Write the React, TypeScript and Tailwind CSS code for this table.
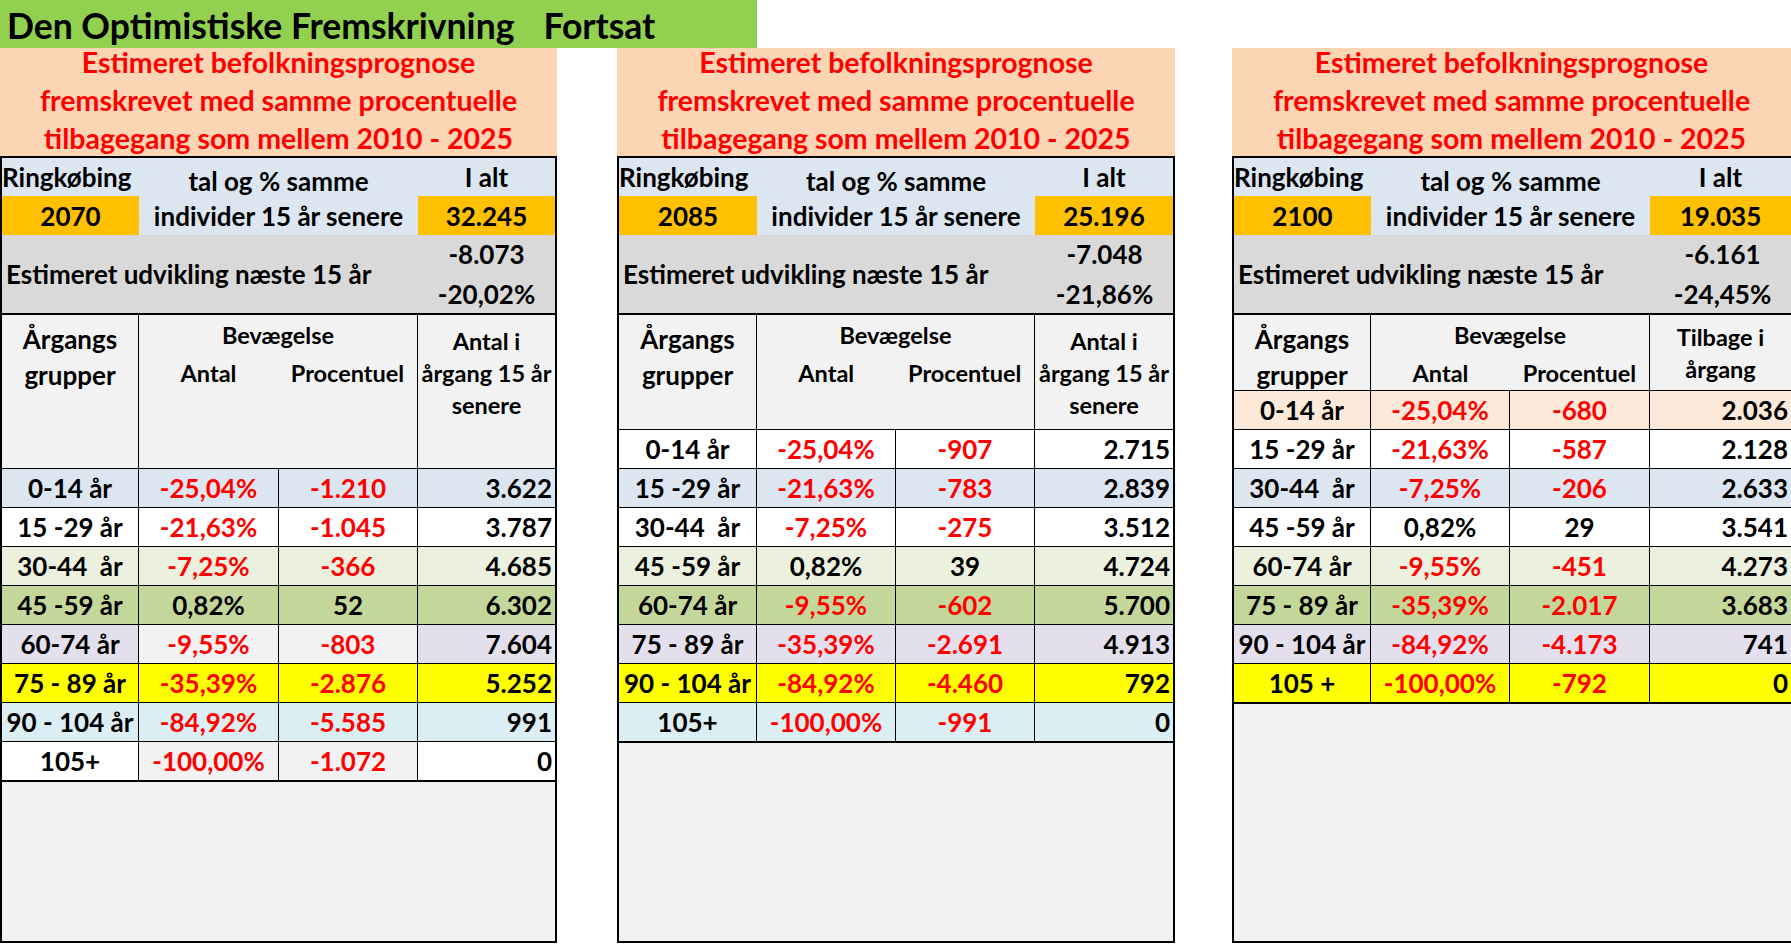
import React from "react";

type Row = {
  label: string;
  a: string;
  b: string;
  c: string;
  bg: string;
  mid?: string;
};

type TableDef = {
  year: string;
  total: string;
  dev1: string;
  dev2: string;
  col4: string[];
  headerH: string;
  col4Pt: string;
  cols: string;
  width: string;
  ml: string;
  rightBorder: boolean;
  rows: Row[];
};

const BLUE = "bg-[#DCE6F1]";
const WHITE = "bg-white";
const LGREEN = "bg-[#EBF1DE]";
const GREEN = "bg-[#C4D79B]";
const LAV = "bg-[#E4DFEC]";
const YEL = "bg-[#FFFF00]";
const CYAN = "bg-[#DAEEF3]";
const LPEACH = "bg-[#FDE9D9]";
const GREY = "bg-[#F2F2F2]";

const tables: TableDef[] = [
  {
    year: "2070",
    total: "32.245",
    dev1: "-8.073",
    dev2: "-20,02%",
    col4: ["Antal i", "årgang 15 år", "senere"],
    headerH: "h-[156px]",
    col4Pt: "pt-[10px]",
    cols: "grid-cols-[137px_140px_139px_1fr]",
    width: "w-[557px]",
    ml: "ml-0",
    rightBorder: true,
    rows: [
      { label: "0-14 år", a: "-25,04%", b: "-1.210", c: "3.622", bg: BLUE },
      { label: "15 -29 år", a: "-21,63%", b: "-1.045", c: "3.787", bg: WHITE },
      { label: "30-44  år", a: "-7,25%", b: "-366", c: "4.685", bg: LGREEN },
      { label: "45 -59 år", a: "0,82%", b: "52", c: "6.302", bg: GREEN },
      { label: "60-74 år", a: "-9,55%", b: "-803", c: "7.604", bg: LAV, mid: GREY },
      { label: "75 - 89 år", a: "-35,39%", b: "-2.876", c: "5.252", bg: YEL },
      { label: "90 - 104 år", a: "-84,92%", b: "-5.585", c: "991", bg: CYAN },
      { label: "105+", a: "-100,00%", b: "-1.072", c: "0", bg: WHITE, mid: GREY },
    ],
  },
  {
    year: "2085",
    total: "25.196",
    dev1: "-7.048",
    dev2: "-21,86%",
    col4: ["Antal i", "årgang 15 år", "senere"],
    headerH: "h-[117px]",
    col4Pt: "pt-[10px]",
    cols: "grid-cols-[138px_139px_139px_1fr]",
    width: "w-[558px]",
    ml: "ml-[60px]",
    rightBorder: true,
    rows: [
      { label: "0-14 år", a: "-25,04%", b: "-907", c: "2.715", bg: WHITE },
      { label: "15 -29 år", a: "-21,63%", b: "-783", c: "2.839", bg: BLUE },
      { label: "30-44  år", a: "-7,25%", b: "-275", c: "3.512", bg: WHITE },
      { label: "45 -59 år", a: "0,82%", b: "39", c: "4.724", bg: LGREEN },
      { label: "60-74 år", a: "-9,55%", b: "-602", c: "5.700", bg: GREEN },
      { label: "75 - 89 år", a: "-35,39%", b: "-2.691", c: "4.913", bg: LAV },
      { label: "90 - 104 år", a: "-84,92%", b: "-4.460", c: "792", bg: YEL },
      { label: "105+", a: "-100,00%", b: "-991", c: "0", bg: CYAN },
    ],
  },
  {
    year: "2100",
    total: "19.035",
    dev1: "-6.161",
    dev2: "-24,45%",
    col4: ["Tilbage i", "årgang"],
    headerH: "h-[78px]",
    col4Pt: "pt-[6px]",
    cols: "grid-cols-[137px_139px_140px_1fr]",
    width: "w-[559px]",
    ml: "ml-[57px]",
    rightBorder: false,
    rows: [
      { label: "0-14 år", a: "-25,04%", b: "-680", c: "2.036", bg: LPEACH },
      { label: "15 -29 år", a: "-21,63%", b: "-587", c: "2.128", bg: WHITE },
      { label: "30-44  år", a: "-7,25%", b: "-206", c: "2.633", bg: BLUE },
      { label: "45 -59 år", a: "0,82%", b: "29", c: "3.541", bg: WHITE },
      { label: "60-74 år", a: "-9,55%", b: "-451", c: "4.273", bg: LGREEN },
      { label: "75 - 89 år", a: "-35,39%", b: "-2.017", c: "3.683", bg: GREEN },
      { label: "90 - 104 år", a: "-84,92%", b: "-4.173", c: "741", bg: LAV },
      { label: "105 +", a: "-100,00%", b: "-792", c: "0", bg: YEL },
    ],
  },
];

function valColor(v: string) {
  return v.startsWith("-") ? "text-[#FF0000]" : "text-black";
}

function Table({ t }: { t: TableDef }) {
  return (
    <div className={`${t.width} ${t.ml} flex flex-col shrink-0`}>
      <div className="h-[108px] bg-[#FCD5B4] flex flex-col items-center justify-center text-[#FF0000] text-[28.5px] leading-[38px] font-bold pb-[4px] whitespace-nowrap">
        <div>Estimeret befolkningsprognose</div>
        <div>fremskrevet med samme procentuelle</div>
        <div>tilbagegang som mellem 2010 - 2025</div>
      </div>
      <div
        className={`h-[787px] flex flex-col border-t-2 border-l-2 border-b-2 border-black bg-[#F2F2F2] ${
          t.rightBorder ? "border-r-2" : "border-r-0"
        }`}
      >
        {/* top block */}
        <div className={`grid ${t.cols} grid-rows-[38px_39px] bg-[#DCE6F1] text-[26px] font-bold text-black`}>
          <div className="flex items-center pl-0 leading-none whitespace-nowrap">Ringkøbing</div>
          <div className="col-span-2 flex items-center justify-center pt-[7px] leading-none whitespace-nowrap">
            tal og % samme
          </div>
          <div className="flex items-center justify-center leading-none">I alt</div>
          <div className="bg-[#FFC000] flex items-center justify-center leading-none">{t.year}</div>
          <div className="col-span-2 flex items-center justify-center leading-none whitespace-nowrap">
            individer 15 år senere
          </div>
          <div className="bg-[#FFC000] flex items-center justify-center leading-none">{t.total}</div>
        </div>
        <div className="h-[78px] bg-[#D9D9D9] flex text-[26px] font-bold text-black">
          <div className="flex-1 flex items-center pl-[4px] pt-[1px] whitespace-nowrap">
            Estimeret udvikling næste 15 år
          </div>
          <div className="w-[137px] flex flex-col items-center justify-center leading-[40px]">
            <div>{t.dev1}</div>
            <div>{t.dev2}</div>
          </div>
        </div>
        {/* header */}
        <div className={`grid ${t.cols} ${t.headerH} border-t-2 border-b border-black bg-[#F2F2F2] font-bold text-black`}>
          <div className="border-r border-black flex flex-col items-center pt-[6px] text-[26px] leading-[36px]">
            <div>Årgangs</div>
            <div>grupper</div>
          </div>
          <div className="col-span-2 border-r border-black flex flex-col pt-[4px] text-[23.5px] leading-[32px]">
            <div className="text-center">Bevægelse</div>
            <div className="grid grid-cols-2 mt-[6px]">
              <div className="text-center">Antal</div>
              <div className="text-center whitespace-nowrap">Procentuel</div>
            </div>
          </div>
          <div className={`flex flex-col items-center ${t.col4Pt} text-[23.5px] leading-[32px] whitespace-nowrap`}>
            {t.col4.map((l) => (
              <div key={l}>{l}</div>
            ))}
          </div>
        </div>
        {/* rows */}
        {t.rows.map((r, i) => {
          const last = i === t.rows.length - 1;
          const mid = r.mid ?? r.bg;
          return (
            <div
              key={r.label}
              className={`grid ${t.cols} border-black ${last ? "h-[40px] border-b-2" : "h-[39px] border-b"} text-[26px] font-bold leading-none`}
            >
              <div className={`${r.bg} border-r border-black flex items-center justify-center whitespace-pre text-black`}>
                {r.label}
              </div>
              <div className={`${mid} border-r border-black flex items-center justify-center ${valColor(r.a)}`}>
                {r.a}
              </div>
              <div className={`${mid} border-r border-black flex items-center justify-center ${valColor(r.b)}`}>
                {r.b}
              </div>
              <div className={`${r.bg} flex items-center justify-end pr-[3px] text-black`}>{r.c}</div>
            </div>
          );
        })}
        <div className="flex-1 bg-[#F2F2F2]" />
      </div>
    </div>
  );
}

export default function App() {
  return (
    <div className="w-[1791px] h-[944px] bg-white overflow-hidden font-['Lato','Open_Sans',sans-serif]">
      <div className="w-[757px] h-[48px] bg-[#92D050] flex items-center pl-[7px] pt-[3px] text-[35.5px] font-bold text-black whitespace-nowrap leading-none">
        <span>Den Optimistiske Fremskrivning</span>
        <span className="ml-[29px]">Fortsat</span>
      </div>
      <div className="flex">
        {tables.map((t) => (
          <Table key={t.year} t={t} />
        ))}
      </div>
    </div>
  );
}
